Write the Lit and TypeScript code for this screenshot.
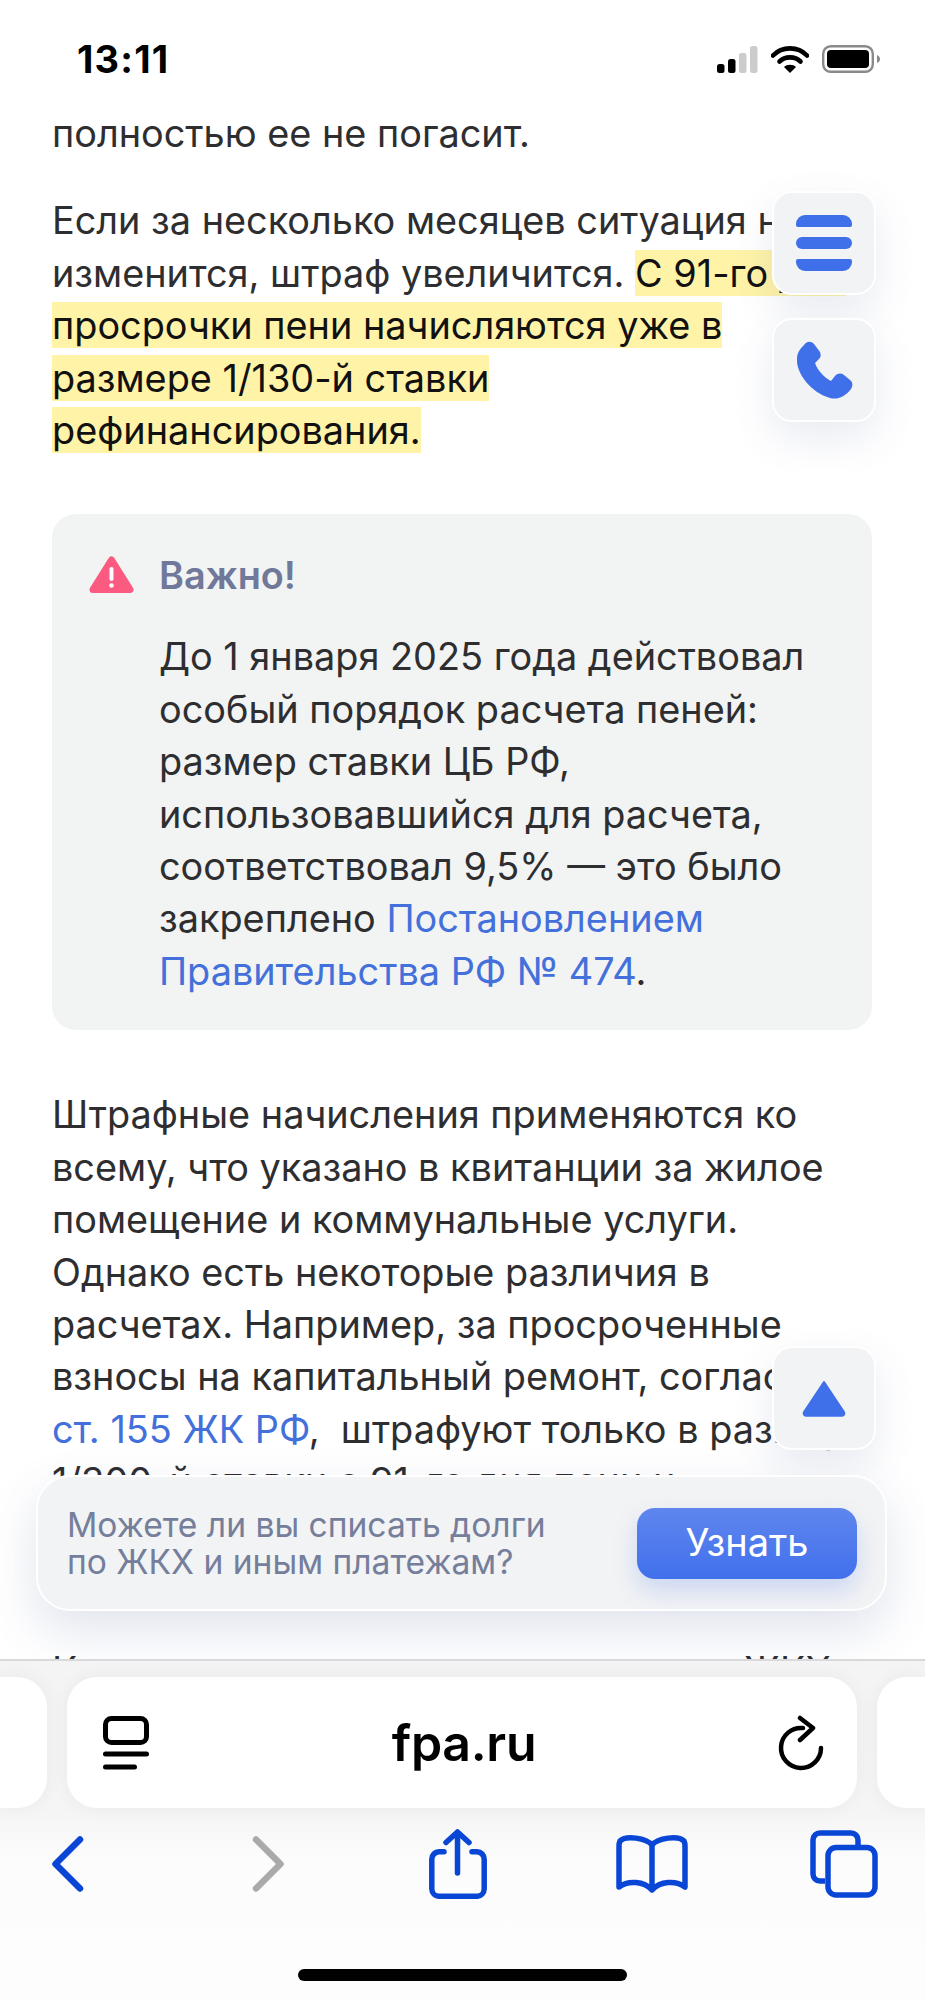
import { LitElement, html, css } from "lit";
import { customElement } from "lit/decorators.js";

@customElement("app-root")
export class AppRoot extends LitElement {
  static styles = css`
    :host { display: block; width: 925px; height: 2000px; position: relative; overflow: hidden; background: #fff;
      font-family: Inter, "Liberation Sans", sans-serif; color: #2e2e30; }
    .status { height: 107px; padding: 40px 44px 0 77px; box-sizing: border-box; display: flex; justify-content: space-between; }
    .time { font-size: 38px; font-weight: 700; color: #000; line-height: 38px; letter-spacing: 1.2px; }
    .sicons { display: flex; align-items: center; gap: 13px; height: 38px; }
    .article { padding: 0 53px 0 52px; font-size: 37.85px; line-height: 52.4px; }
    p { margin: 0; }
    .p2 { margin-top: 35px; }
    mark { background: #fff3a8; color: #111; padding: 0; }
    a { color: #4370da; text-decoration: none; }
    .note { margin-top: 58px; width: 820px; height: 516px; box-sizing: border-box; background: #f2f3f3; border-radius: 24px; padding: 34px 30px 0 37px; }
    .note-h { display: flex; align-items: center; gap: 25px; height: 54px; font-weight: 600; color: #71799a; }
    .note-b { margin: 28px 0 0 70px; }
    .p3 { margin-top: 58px; }
    .line { white-space: nowrap; }
    .p4 { margin-top: 136px; white-space: nowrap; }
    .fab { position: absolute; left: 772px; width: 104px; height: 104px; box-sizing: border-box; background: #f2f3f4; border: 2px solid #fff; border-radius: 20px;
      box-shadow: 0 16px 40px rgba(70, 90, 150, .12); display: flex; align-items: center; justify-content: center; }
    .f-menu { top: 191px; }
    .f-phone { top: 318px; }
    .f-up { top: 1346px; }
    .banner { position: absolute; left: 36px; top: 1475px; width: 851px; height: 136px; box-sizing: border-box; background: #f2f3f4; border: 2px solid #fff; border-radius: 34px;
      box-shadow: 0 20px 50px rgba(70, 90, 150, .16); display: flex; align-items: center; justify-content: space-between; padding: 0 28px 0 29px; font-size: 33.6px; line-height: 37.5px; color: #757e9b; }
    .btn { width: 220px; height: 71px; border-radius: 18px; background: linear-gradient(#5f86ee, #4170ec); color: #fff; font-size: 38px; display: flex; align-items: center; justify-content: center; box-shadow: 0 12px 24px rgba(65, 112, 236, .22); }
    .safari { position: absolute; left: 0; top: 1659px; width: 925px; height: 341px; background: linear-gradient(#f4f4f4 0, #f5f5f5 150px, #fcfcfc 200px, #fdfdfd 100%); border-top: 2px solid #d9d9db; box-sizing: border-box; }
    .url-row { display: flex; gap: 20px; margin-top: 16px; height: 131px; }
    .pill { background: #fff; border-radius: 30px; height: 131px; box-shadow: 0 0 20px rgba(0, 0, 0, .05); flex: none; }
    .pill.main { width: 790px; display: flex; align-items: center; justify-content: space-between; padding: 0 31px 0 35px; box-sizing: border-box; }
    .pill.left { width: 47px; border-radius: 0 30px 30px 0; }
    .pill.right { width: 48px; border-radius: 30px 0 0 30px; }
    .url { font-size: 50px; font-weight: 600; color: #000; letter-spacing: -.3px; }
    .tools { display: flex; align-items: center; padding: 18px 0 0 52px; height: 76px; }
    .m1 { margin-left: 168px; }
    .m2 { margin-left: 145px; }
    .m3 { margin-left: 129px; }
    .m4 { margin-left: 122px; }
    .home { position: absolute; left: 298px; top: 1969px; width: 329px; height: 12px; border-radius: 6px; background: #000; }
  `;

  render() {
    return html`
      <div class="status">
        <div class="time">13:11</div>
        <div class="sicons">
          <svg width="41" height="27" viewBox="0 0 41 27"><rect x="0" y="18" width="7.5" height="9" rx="2.5" fill="#000"/><rect x="11" y="13" width="7.5" height="14" rx="2.5" fill="#000"/><rect x="22" y="7" width="7.5" height="20" rx="2.5" fill="#ccc"/><rect x="33" y="0" width="7.5" height="27" rx="2.5" fill="#ccc"/></svg>
          <svg width="38" height="28" viewBox="0 0 38 28"><path d="M2 10.5C11 1 27 1 36 10.5" fill="none" stroke="#000" stroke-width="4.6" stroke-linecap="round"/><path d="M8.5 16.5C14 11 24 11 29.5 16.5" fill="none" stroke="#000" stroke-width="4.6" stroke-linecap="round"/><path d="M19 28l-6-6c3-3 9-3 12 0z" fill="#000"/></svg>
          <svg width="59" height="28" viewBox="0 0 59 28"><rect x="1.2" y="1.2" width="49.6" height="25.6" rx="7.5" fill="none" stroke="#8a8a8a" stroke-width="2.4"/><rect x="5" y="5" width="42" height="18" rx="4" fill="#000"/><path d="M55 10c2 1 3 2 3 4s-1 3-3 4z" fill="#8a8a8a"/></svg>
        </div>
      </div>
      <div class="article">
        <p>полностью ее не погасит.</p>
        <p class="p2">Если за несколько месяцев ситуация не изменится, штраф увеличится. <mark>С 91-го дня просрочки пени начисляются уже в размере 1/130-й ставки<br>рефинансирования.</mark></p>
        <div class="note">
          <div class="note-h">
            <svg width="45" height="40" viewBox="0 0 45 40"><path d="M22.5 5 41 34.5H4z" fill="#fb5b80" stroke="#fb5b80" stroke-width="7" stroke-linejoin="round"/><rect x="20.5" y="12" width="4" height="14" rx="2" fill="#fff"/><circle cx="22.5" cy="30.5" r="2.3" fill="#fff"/></svg>
            <span>Важно!</span>
          </div>
          <div class="note-b">До 1 января 2025 года действовал особый порядок расчета пеней: размер ставки ЦБ РФ, использовавшийся для расчета, соответствовал 9,5% — это было закреплено <a>Постановлением Правительства РФ № 474</a>.</div>
        </div>
        <p class="p3">Штрафные начисления применяются ко всему, что указано в квитанции за жилое помещение и коммунальные услуги. Однако есть некоторые различия в расчетах. Например, за просроченные взносы на капитальный ремонт, согласно <span class="line"><a>ст. 155 ЖК РФ</a>,&nbsp; штрафуют только в размере</span><br>1/300-й ставки с 91-го дня пени и</p>
        <p class="p4">Как рассчитать пени за просрочку в ЖКХ</p>
      </div>

      <div class="fab f-menu">
        <svg width="58" height="58" viewBox="0 0 58 58"><path d="M10 1h38a9 9 0 0 1 9 9v1a2 2 0 0 1-2 2H3a2 2 0 0 1-2-2v-1a9 9 0 0 1 9-9z" fill="#3f70ea"/><rect x="1" y="23" width="56" height="12" rx="6" fill="#3f70ea"/><path d="M3 45h52a2 2 0 0 1 2 2v1a9 9 0 0 1-9 9H10a9 9 0 0 1-9-9v-1a2 2 0 0 1 2-2z" fill="#3f70ea"/></svg>
      </div>
      <div class="fab f-phone">
        <svg width="58" height="58" viewBox="0 0 58 58"><path d="M9 4C12 0 16 0 19 3l6 8c1 3 1 5-1 7l-4 4c3 8 9 14 16 18l4-5c3-3 6-3 9-1l6 5c3 2 3 6 1 9-6 8-14 11-21 9C16 52 1 32 2 18 2 12 5 8 9 4z" fill="#3f70ea"/></svg>
      </div>
      <div class="fab f-up">
        <svg width="46" height="38" viewBox="0 0 46 38"><path d="M23 3 43 33a2.5 2.5 0 0 1-2 3.8H5A2.5 2.5 0 0 1 3 33z" fill="#3f70ea" stroke="#3f70ea" stroke-width="2" stroke-linejoin="round"/></svg>
      </div>

      <div class="banner">
        <div>Можете ли вы списать долги<br>по ЖКХ и иным платежам?</div>
        <div class="btn">Узнать</div>
      </div>

      <div class="safari">
        <div class="url-row">
          <div class="pill left"></div>
          <div class="pill main">
            <svg width="48" height="56" viewBox="0 0 48 56" fill="none" stroke="#000" stroke-linecap="round" stroke-width="5"><rect x="3.5" y="3.5" width="41" height="24" rx="6"/><path d="M3.5 39h41M3.5 52h29"/></svg>
            <div class="url">fpa.ru</div>
            <svg width="48" height="56" viewBox="0 0 48 56" fill="none" stroke="#000" stroke-linecap="round" stroke-linejoin="round" stroke-width="4.5"><path d="M43 33A20 20 0 1 1 25 13"/><path d="M22 3 35 13 22 25"/></svg>
          </div>
          <div class="pill right"></div>
        </div>
        <div class="tools">
          <svg width="32" height="56" viewBox="0 0 32 56" fill="none" stroke="#0a46d6" stroke-width="6.5" stroke-linecap="round" stroke-linejoin="round"><path d="M28 3.5 3.5 28 28 52.5"/></svg>
          <svg class="m1" width="32" height="56" viewBox="0 0 32 56" fill="none" stroke="#aaa" stroke-width="6.5" stroke-linecap="round" stroke-linejoin="round"><path d="M4 3.5 28.5 28 4 52.5"/></svg>
          <svg class="m2" width="58" height="70" viewBox="0 0 58 70" fill="none" stroke="#0a46d6" stroke-width="5.5" stroke-linecap="round" stroke-linejoin="round"><path d="M15 22.7H10a7.5 7.5 0 0 0-7.2 7.5V60a7.5 7.5 0 0 0 7.2 7.3h38a7.5 7.5 0 0 0 7.2-7.3V30.2a7.5 7.5 0 0 0-7.2-7.5h-5"/><path d="M28.5 44V3.5M17 13.5 28.5 3 40 13.5"/></svg>
          <svg class="m3" width="72" height="60" viewBox="0 0 72 60" fill="none" stroke="#0a46d6" stroke-width="5.5" stroke-linejoin="round" stroke-linecap="round"><path d="M36 11C30 4 10 1 4 7Q3 9 3 12V53C12 46 28 47 36 56 44 47 60 46 69 53V12Q69 9 68 7C62 1 42 4 36 11ZM36 11V56"/></svg>
          <svg class="m4" width="68" height="68" viewBox="0 0 68 68" fill="none" stroke="#0a46d6" stroke-width="5.5"><path d="M15 51H10a7 7 0 0 1-7-7V10a7 7 0 0 1 7-7h31a7 7 0 0 1 7 7v5"/><rect x="18" y="17.5" width="47" height="47.5" rx="8"/></svg>
        </div>
      </div>
      <div class="home"></div>
    `;
  }
}
